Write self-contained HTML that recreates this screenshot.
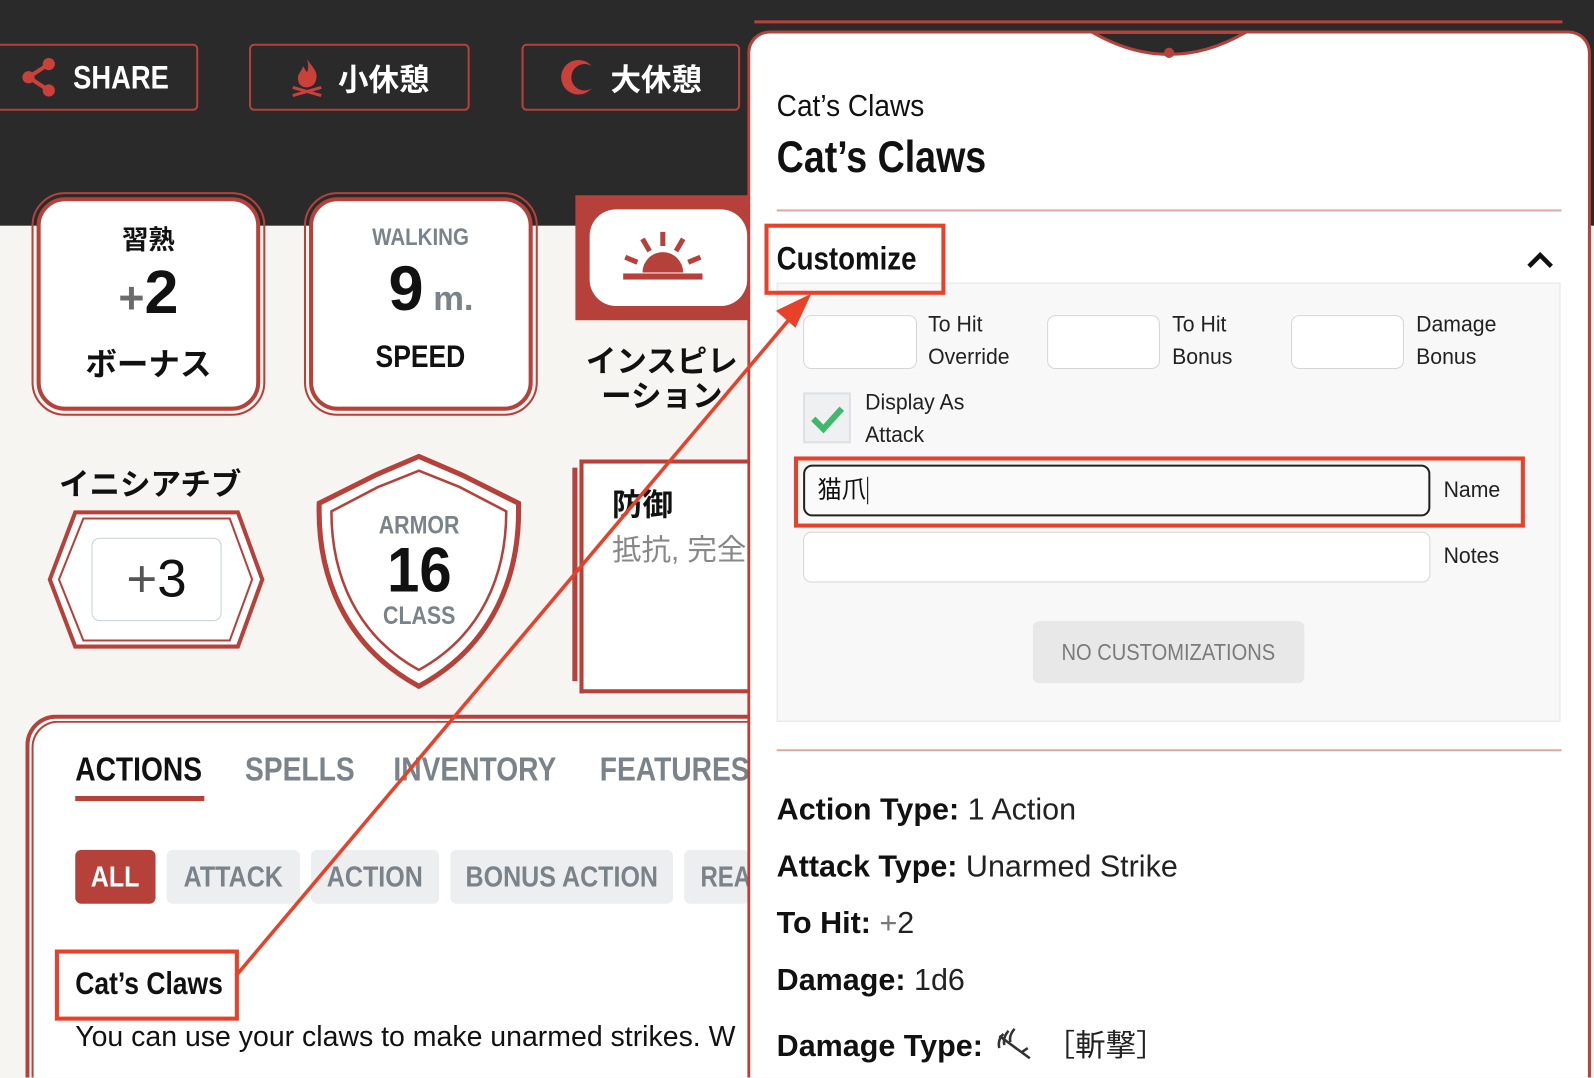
<!DOCTYPE html>
<html><head><meta charset="utf-8"><style>
html,body{margin:0;padding:0;width:1594px;height:1078px;overflow:hidden;background:#f6f5f2}
#w{position:absolute;left:0;top:0;width:1568px;height:1060px;overflow:hidden;transform:scale(1.0166);transform-origin:0 0;font-family:"Liberation Sans","Noto Sans CJK JP",sans-serif;color:#111}
.a{position:absolute}
.n{font-family:"Liberation Sans","Noto Sans CJK JP",sans-serif;font-weight:bold}
.s{display:inline-block;transform:scaleX(.84);transform-origin:0 50%;white-space:nowrap}
.sc{display:inline-block;transform:scaleX(.84);transform-origin:50% 50%;white-space:nowrap}
.btn{position:absolute;top:43px;height:66px;border:2px solid #b5413a;border-radius:5px;color:#fff;font-size:30px;display:flex;align-items:center;justify-content:center;gap:14px;box-sizing:border-box}
.stat{position:absolute;background:#fff;border:4px solid #b5413a;border-radius:28px;outline:2px solid #b5413a;outline-offset:3px;text-align:center}
.inp{position:absolute;background:#fff;border:1.5px solid #d6d6d6;border-radius:8px}
.lbl{position:absolute;font-size:22px;line-height:32px;color:#222}
.lbl span{display:inline-block;transform:scaleX(.95);transform-origin:0 50%;white-space:nowrap}
.pr{position:absolute;left:764px;font-size:30px;color:#222;white-space:nowrap}
.pr b{color:#111}
.flt{position:absolute;top:836px;height:53px;background:#eceeef;border-radius:6px;color:#7a838a;font-size:28px;display:flex;align-items:center;justify-content:center;overflow:hidden}
.flt .sc{transform:scaleX(.88)}
.rb{position:absolute;border:4px solid #e8412a}
</style></head><body><div id="w">
<div class="a" style="left:0;top:0;width:1568px;height:222px;background:#2a2a2a"></div>
<div class="btn n" style="left:-5px;width:200px;font-size:32px"><svg width="34" height="40" viewBox="0 0 34 40"><g fill="#c9413a"><circle cx="27" cy="7" r="6"/><circle cx="7" cy="20" r="6"/><circle cx="27" cy="33" r="6"/></g><path d="M27 7L7 20L27 33" stroke="#c9413a" stroke-width="4" fill="none"/></svg><span class="sc" style="margin:0 -6px">SHARE</span></div>
<div class="btn n" style="left:245px;width:217px"><svg width="34" height="40" viewBox="0 0 34 40"><path d="M17 2C22 10 28 14 26 22C25 28 20 30 17 30C12 30 8 27 8 21C8 16 12 14 13 9C15 12 16 14 17 15C19 11 18 6 17 2Z" fill="#c9413a"/><path d="M3 30L31 38M3 38L31 30" stroke="#c9413a" stroke-width="3"/></svg><span>小休憩</span></div>
<div class="btn n" style="left:513px;width:215px"><svg width="36" height="40" viewBox="0 0 36 40"><circle cx="18" cy="20" r="17" fill="#c9413a"/><circle cx="24" cy="20" r="13" fill="#2a2a2a"/></svg><span>大休憩</span></div>

<div class="stat" style="left:36px;top:194px;width:212px;height:202px"><div class="n" style="margin-top:18px;font-size:26px">習熟</div><div style="font-size:60px;font-weight:bold;line-height:70px"><span style="color:#6b6b6b;font-size:44px">+</span>2</div><div class="n" style="font-size:31px;margin-top:4px">ボーナス</div></div>
<div class="stat" style="left:304px;top:194px;width:212px;height:202px"><div class="n" style="margin-top:22px;font-size:24px;color:#7a838a"><span class="sc">WALKING</span></div><div style="font-size:62px;font-weight:bold;line-height:74px;margin-left:20px">9<span style="color:#7a838a;font-size:34px"> m.</span></div><div class="n" style="font-size:31px;margin-top:2px"><span class="sc">SPEED</span></div></div>
<div class="a" style="left:566px;top:192px;width:170px;height:123px;background:#b5413a"></div>
<div class="a" style="left:580px;top:206px;width:155px;height:95px;background:#fff;border-radius:26px"></div>
<svg class="a" style="left:610px;top:228px" width="84" height="50" viewBox="0 0 84 50"><g stroke="#b5413a" stroke-width="5"><path d="M42 0V14M22 7L29 19M62 7L55 19M5 25L17 30M79 25L67 30"/></g><path d="M22 40A20 20 0 0 1 62 40Z" fill="#b5413a"/><rect x="3" y="41" width="78" height="6" fill="#b5413a"/></svg>
<div class="a" style="left:566px;top:340px;width:170px;font-size:30px;line-height:34px;text-align:center;overflow:hidden;white-space:nowrap;font-weight:bold">インスピレ<br>ーション</div>

<div class="a n" style="left:58px;top:452px;font-size:30px">イニシアチブ</div>
<svg class="a" style="left:46px;top:501px" width="216" height="138" viewBox="0 0 216 138"><path d="M28 3H188L212 69L188 135H28L3 69Z" fill="#fff" stroke="#b5413a" stroke-width="4"/><path d="M36 9H180L202 69L180 129H36L12 69Z" fill="none" stroke="#b5413a" stroke-width="2"/></svg>
<div class="a" style="left:90px;top:529px;width:126px;height:80px;border:1.5px solid #c8cfd5;border-radius:8px;background:#fff;font-size:52px;text-align:center;line-height:80px"><span style="color:#555">+</span>3</div>
<svg class="a" style="left:306px;top:445px" width="212" height="236" viewBox="0 0 212 236"><path d="M106 4L148 22L204 50C206 120 180 190 106 230C32 190 6 120 8 50L64 22Z" fill="#fff" stroke="#b5413a" stroke-width="5"/><path d="M106 18L146 34L192 58C192 120 168 180 106 214C44 180 20 120 20 58L66 34Z" fill="none" stroke="#b5413a" stroke-width="2.5"/></svg>
<div class="a n" style="left:310px;top:503px;width:204px;text-align:center;color:#7a838a;font-size:25px"><span class="sc">ARMOR</span></div>
<div class="a" style="left:310px;top:526px;width:204px;text-align:center;font-size:62px;font-weight:bold"><span class="sc" style="transform:scaleX(.92)">16</span></div>
<div class="a n" style="left:310px;top:592px;width:204px;text-align:center;color:#7a838a;font-size:25px"><span class="sc">CLASS</span></div>
<div class="a" style="left:570px;top:452px;width:170px;height:222px;background:#fff;border:4px solid #b5413a;border-right:none"></div>
<div class="a" style="left:563px;top:460px;width:5px;height:210px;background:#b5413a"></div>
<div class="a n" style="left:602px;top:472px;font-size:30px">防御</div>
<div class="a" style="left:602px;top:518px;font-size:29px;color:#888;white-space:nowrap;width:134px;overflow:hidden">抵抗, 完全</div>

<div class="a" style="left:25px;top:703px;width:720px;height:357px;background:#fff;border:4px solid #b5413a;border-bottom:none;border-radius:30px 0 0 0;box-sizing:border-box"></div>
<div class="a" style="left:31px;top:709px;width:708px;height:351px;border:2px solid #b5413a;border-radius:26px 0 0 0;border-right:none;border-bottom:none;box-sizing:border-box"></div>
<div class="a n" style="left:74px;top:738px;font-size:33px"><span class="s">ACTIONS</span></div>
<div class="a" style="left:74px;top:783px;width:127px;height:5px;background:#b5413a"></div>
<div class="a n" style="left:241px;top:738px;font-size:33px;color:#7a838a"><span class="s">SPELLS</span></div>
<div class="a n" style="left:387px;top:738px;font-size:33px;color:#7a838a"><span class="s">INVENTORY</span></div>
<div class="a n" style="left:590px;top:738px;font-size:33px;color:#7a838a;width:146px;overflow:hidden"><span class="s">FEATURES</span></div>
<div class="flt n" style="left:74px;width:79px;background:#b5413a;color:#fff"><span class="sc">ALL</span></div>
<div class="flt n" style="left:164px;width:131px"><span class="sc">ATTACK</span></div>
<div class="flt n" style="left:306px;width:126px"><span class="sc">ACTION</span></div>
<div class="flt n" style="left:443px;width:219px"><span class="sc">BONUS ACTION</span></div>
<div class="flt n" style="left:673px;width:64px;justify-content:flex-start;padding-left:16px;box-sizing:border-box"><span class="s">REA</span></div>
<div class="a n" style="left:74px;top:950px;font-size:31px"><span class="s">Cat’s Claws</span></div>
<div class="a" style="left:74px;top:1004px;font-size:28px;white-space:nowrap;width:662px;overflow:hidden"><span class="s" style="transform:scaleX(1)">You can use your claws to make unarmed strikes. W</span></div>

<div class="a" style="left:735px;top:30px;width:830px;height:1030px;background:#fff;border:3px solid #b5413a;border-bottom:none;border-radius:22px 22px 0 0;box-sizing:border-box"></div>
<div class="a" style="left:742px;top:20px;width:795px;height:14px;border-top:3px solid #b5413a"></div>
<svg class="a" style="left:1070px;top:30px" width="160" height="30" viewBox="0 0 160 30"><path d="M5 2Q80 45 155 2Z" fill="#2a2a2a" stroke="#b5413a" stroke-width="3"/><circle cx="80" cy="22" r="5" fill="#b5413a"/></svg>
<div class="a" style="left:764px;top:88px;font-size:30px"><span class="s" style="transform:scaleX(.92)">Cat’s Claws</span></div>
<div class="a n" style="left:764px;top:130px;font-size:44px"><span class="s">Cat’s Claws</span></div>
<div class="a" style="left:764px;top:206px;width:772px;height:2px;background:#dca9a6"></div>
<div class="a n" style="left:764px;top:236px;font-size:32px"><span class="s" style="transform:scaleX(.85)">Customize</span></div>
<svg class="a" style="left:1501px;top:246px" width="28" height="20" viewBox="0 0 28 20"><path d="M3 16L14 5L25 16" stroke="#111" stroke-width="4.5" fill="none"/></svg>
<div class="a" style="left:764px;top:278px;width:771px;height:432px;background:#f8f8f8;border:1.5px solid #e4e4e4;box-sizing:border-box"></div>
<div class="inp" style="left:790px;top:310px;width:110px;height:51px"></div><div class="lbl" style="left:913px;top:303px"><span>To Hit</span><br><span>Override</span></div>
<div class="inp" style="left:1030px;top:310px;width:109px;height:51px"></div><div class="lbl" style="left:1153px;top:303px"><span>To Hit</span><br><span>Bonus</span></div>
<div class="inp" style="left:1270px;top:310px;width:109px;height:51px"></div><div class="lbl" style="left:1393px;top:303px"><span>Damage</span><br><span>Bonus</span></div>
<div class="a" style="left:790px;top:386px;width:47px;height:50px;background:#eef0f1;border:2px solid #dde1e4;box-sizing:border-box"></div>
<svg class="a" style="left:796px;top:396px" width="36" height="32" viewBox="0 0 36 32"><path d="M4 16L14 26L32 6" stroke="#3fb86b" stroke-width="6" fill="none"/></svg>
<div class="lbl" style="left:851px;top:380px"><span>Display As</span><br><span>Attack</span></div>
<div class="a" style="left:790px;top:457px;width:617px;height:51px;background:#fafafa;border:2px solid #222;border-radius:9px;box-sizing:border-box;font-size:24px;line-height:47px;padding-left:12px">猫爪<span style="border-left:1.5px solid #000;margin-left:1px"></span></div>
<div class="lbl" style="left:1420px;top:466px"><span>Name</span></div>
<div class="inp" style="left:790px;top:523px;width:617px;height:50px;box-sizing:border-box"></div>
<div class="lbl" style="left:1420px;top:531px"><span>Notes</span></div>
<div class="a" style="left:1016px;top:611px;width:267px;height:61px;background:#e8e8e8;border-radius:6px;color:#7b7b7b;font-size:23px;text-align:center;line-height:61px"><span class="sc" style="transform:scaleX(.86)">NO CUSTOMIZATIONS</span></div>
<div class="a" style="left:764px;top:737px;width:772px;height:2px;background:#dca9a6"></div>
<div class="pr" style="top:780px"><b>Action Type:</b> 1 Action</div>
<div class="pr" style="top:836px"><b>Attack Type:</b> Unarmed Strike</div>
<div class="pr" style="top:892px"><b>To Hit:</b> <span style="color:#777">+</span>2</div>
<div class="pr" style="top:948px"><b>Damage:</b> 1d6</div>
<div class="pr" style="top:1004px"><b>Damage Type:</b> <svg width="44" height="36" viewBox="0 0 44 36" style="vertical-align:-6px"><path d="M8 10L38 32M12 8Q6 14 8 22M17 5Q11 12 13 19M23 3Q17 10 19 16M30 26L36 22" stroke="#333" stroke-width="2.5" fill="none"/></svg> ［斬撃］</div>

<div class="rb" style="left:752px;top:220px;width:170px;height:62px"></div>
<div class="rb" style="left:781px;top:449px;width:711px;height:62px"></div>
<div class="rb" style="left:54px;top:934px;width:173px;height:62px"></div>
<svg class="a" style="left:0;top:0" width="1568" height="1060"><path d="M232 960L790 298" stroke="#e8412a" stroke-width="3.5" fill="none"/><path d="M795 292L766 306L782 320Z" fill="#e8412a" stroke="#e8412a" stroke-width="3"/></svg>
</div></body></html>
